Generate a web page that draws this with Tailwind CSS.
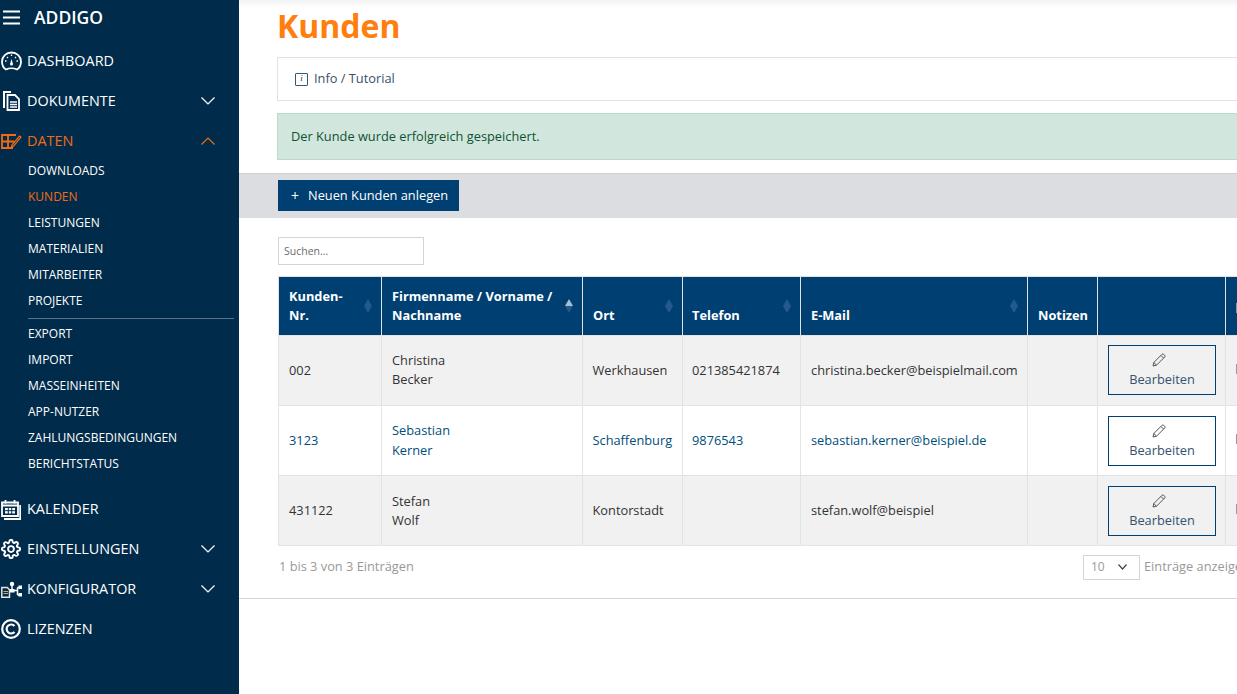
<!DOCTYPE html>
<html lang="de">
  <head>
    <meta charset="UTF-8" />
    <title>Kunden</title>
    <script src="https://cdn.jsdelivr.net/npm/@tailwindcss/browser@4"></script>
  </head>
  <body class="font-['Open_Sans',sans-serif] bg-white overflow-hidden">
    <div class="flex h-[694px] w-[1237px] overflow-hidden">
      <!-- sidebar -->
      <aside class="w-[239px] shrink-0 h-full bg-[#002b4a] text-white">
        <div class="flex items-center h-[35px] pl-[3px]">
          <svg class="w-[17px] h-[15px]" viewBox="0 0 17 15" stroke="#fff" stroke-width="1.800"><path d="M0 1.500h17M0 7.500h17M0 13.500h17"/></svg>
          <span class="ml-[14px] text-[17.500px] font-semibold">ADDIGO</span>
        </div>
        <nav class="pt-[6px] text-[14.400px]">
          <a class="flex items-center h-[40px]">
            <span class="w-[27px] pl-[1px]"><svg class="w-[21px] h-[20px]" viewBox="0 0 21 20" fill="none" stroke="#fff" stroke-width="1.800"><path d="M5 18.500c-2.500-1.500-4-4.500-4-8a9.500 9 0 0 1 19 0c0 3.500-1.500 6.500-4 8-3-1.500-8-1.500-11 0z"/><path d="M10.500 8l1.500 5a1.500 1.500 0 1 1-3 0z" fill="#fff" stroke="none"/><path d="M4 10h1.500M15.500 10H17M6 6l1 1M15 6l-1 1M10.500 3.500V5" stroke-width="1.300"/></svg></span>
            <span>DASHBOARD</span>
          </a>
          <a class="flex items-center h-[40px]">
            <span class="w-[27px] pl-[3px]"><svg class="w-[17px] h-[20px]" viewBox="0 0 17 20" fill="none" stroke="#fff" stroke-width="1.800"><path d="M1 17V1h7" stroke-width="2"/><path d="M4.500 19V4h7.500l4 4v11z"/><path d="M7 11h7M7 13.500h7M7 16h7" stroke-width="1.500"/></svg></span>
            <span>DOKUMENTE</span>
            <svg class="ml-auto mr-[24px] w-[14px] h-[8px]" viewBox="0 0 14 8" fill="none" stroke="#fff" stroke-width="1.200"><path d="M.5.5 7 7l6.500-6.500"/></svg>
          </a>
          <a class="flex items-center h-[40px] text-[#f26b14]">
            <span class="w-[27px] pl-[1px]"><svg class="w-[21px] h-[15px]" viewBox="0 0 21 15" fill="none" stroke="#f26b14" stroke-width="1.800"><path d="M15 1H1v13h11M1 7.500h12M7 1v13"/><path d="M11 11l7.500-9 1.500 1.200-7.500 9-2 .8z" stroke-width="1.200"/></svg></span>
            <span>DATEN</span>
            <svg class="ml-auto mr-[24px] w-[14px] h-[8px]" viewBox="0 0 14 8" fill="none" stroke="#f26b14" stroke-width="1.200"><path d="M.5 7.500 7 1l6.500 6.500"/></svg>
          </a>
          <div class="text-[12px] pl-[28px] pr-[5px] -mt-[3px]">
            <a class="flex items-center h-[26px]">DOWNLOADS</a>
            <a class="flex items-center h-[26px] text-[#f26b14]">KUNDEN</a>
            <a class="flex items-center h-[26px]">LEISTUNGEN</a>
            <a class="flex items-center h-[26px]">MATERIALIEN</a>
            <a class="flex items-center h-[26px]">MITARBEITER</a>
            <a class="flex items-center h-[26px]">PROJEKTE</a>
            <div class="border-t border-[#5a7288] mt-[4px] mb-[2px]"></div>
            <a class="flex items-center h-[26px]">EXPORT</a>
            <a class="flex items-center h-[26px]">IMPORT</a>
            <a class="flex items-center h-[26px]">MASSEINHEITEN</a>
            <a class="flex items-center h-[26px]">APP-NUTZER</a>
            <a class="flex items-center h-[26px]">ZAHLUNGSBEDINGUNGEN</a>
            <a class="flex items-center h-[26px]">BERICHTSTATUS</a>
          </div>
          <div class="h-[12px]"></div>
          <a class="flex items-center h-[40px]">
            <span class="w-[27px] pl-[1px]"><svg class="w-[20px] h-[21px]" viewBox="0 0 20 21" fill="none" stroke="#fff" stroke-width="1.800"><path d="M1 3.500h16v13.500H1z"/><path d="M1 6.500h16" stroke-width="2"/><path d="M4.500 1v3.500M13.500 1v3.500M19.200 6v14H3"/><path d="M4 9h10v5.500H4z" fill="#fff" stroke="none"/><path d="M7.300 8.500v6.500M10.700 8.500v6.500M4 11.700h10" stroke="#002b4a" stroke-width="1"/></svg></span>
            <span>KALENDER</span>
          </a>
          <a class="flex items-center h-[40px]">
            <span class="w-[27px] pl-[1px]"><svg class="w-[20px] h-[20px]" viewBox="0 0 24 24" fill="none" stroke="#fff" stroke-width="2.300"><path d="M12 15.500a3.500 3.500 0 1 0 0-7 3.500 3.500 0 0 0 0 7z"/><path d="M19.400 15a1.650 1.650 0 0 0 .33 1.820l.06.06a2 2 0 1 1-2.830 2.830l-.06-.06a1.650 1.650 0 0 0-2.820 1.170V21a2 2 0 0 1-4 0v-.09A1.650 1.650 0 0 0 7.260 19.700l-.06.06a2 2 0 1 1-2.830-2.830l.06-.06A1.650 1.650 0 0 0 3.260 14H3a2 2 0 0 1 0-4h.09A1.650 1.650 0 0 0 4.300 7.260l-.06-.06a2 2 0 1 1 2.830-2.830l.06.06A1.650 1.650 0 0 0 10 3.260V3a2 2 0 0 1 4 0v.09a1.650 1.650 0 0 0 2.820 1.170l.06-.06a2 2 0 1 1 2.830 2.830l-.06.06A1.650 1.650 0 0 0 20.740 10H21a2 2 0 0 1 0 4h-.09a1.650 1.650 0 0 0-1.510 1z"/></svg></span>
            <span>EINSTELLUNGEN</span>
            <svg class="ml-auto mr-[24px] w-[14px] h-[8px]" viewBox="0 0 14 8" fill="none" stroke="#fff" stroke-width="1.200"><path d="M.5.5 7 7l6.500-6.500"/></svg>
          </a>
          <a class="flex items-center h-[40px]">
            <span class="w-[27px] pl-[1px]"><svg class="w-[21px] h-[17px]" viewBox="0 0 21 17" fill="none" stroke="#fff" stroke-width="1.500"><path d="M.8 6.500h5.500l2.200 2.200v7.500H.8z" stroke="#dfe4e8"/><path d="M2.500 10.500h4.500M2.500 12.500h4.500" stroke="#e0a050" stroke-width="1.200"/><circle cx="11" cy="3" r="2.200" fill="#fff" stroke="none"/><path d="M11 5v4.500"/><rect x="9" y="8" width="4.500" height="3.500" fill="#fff" stroke="none"/><path d="M13 9.500h3.500M16.500 6.500v7.500M16.500 6.500h2M16.500 14h2"/><rect x="17.500" y="4.500" width="3.500" height="3.500" fill="#fff" stroke="none"/><rect x="17.500" y="12" width="3.500" height="3.500" fill="#fff" stroke="none"/></svg></span>
            <span>KONFIGURATOR</span>
            <svg class="ml-auto mr-[24px] w-[14px] h-[8px]" viewBox="0 0 14 8" fill="none" stroke="#fff" stroke-width="1.200"><path d="M.5.5 7 7l6.500-6.500"/></svg>
          </a>
          <a class="flex items-center h-[40px]">
            <span class="w-[27px] pl-[1px]"><svg class="w-[20px] h-[20px]" viewBox="0 0 20 20" fill="none" stroke="#fff" stroke-width="2.200"><circle cx="10" cy="10" r="8.800"/><path d="M13.500 7a4.500 4.500 0 1 0 0 6"/></svg></span>
            <span>LIZENZEN</span>
          </a>
        </nav>
      </aside>

      <!-- main -->
      <main class="flex-1 min-w-0 h-full overflow-hidden relative">
        <div class="w-[1300px]">
          <div class="h-[8px] bg-gradient-to-b from-[#f3f3f3] to-white -mb-[8px]"></div>
          <div class="pl-[38px]">
            <h1 class="text-[32px] leading-[40px] pt-[6px] font-bold text-[#ff7f0e]">Kunden</h1>
            <div class="mt-[11px] h-[44px] border border-[#e0e2e6] flex items-center pl-[17px] text-[12.800px] text-[#3a5068]">
              <span class="w-[13px] h-[13px] border border-[#34597a] rounded-[1px] flex items-center justify-center text-[9px] italic font-['Liberation_Serif',serif] text-[#333] mr-[6px]">i</span>
              Info / Tutorial
            </div>
            <div class="mt-[12px] h-[47px] border border-[#badbcc] bg-[#d1e7dd] flex items-center pl-[13px] text-[12.800px] text-[#0f5132]">Der Kunde wurde erfolgreich gespeichert.</div>
          </div>
          <div class="mt-[13px] h-[45px] bg-[#dcdde0] border-t border-[#cfd0d3] pl-[39px] pt-[6px]">
            <button class="h-[31px] w-[181px] bg-[#003f72] text-white text-[12.800px] flex items-center pl-[13px]">
              <span class="mr-[9px] text-[14px]">+</span>Neuen Kunden anlegen
            </button>
          </div>
          <div class="pl-[39px]">
            <input class="mt-[19px] block w-[146px] h-[28px] border border-[#d3d5d9] px-[5px] text-[10.500px] text-[#555] placeholder:text-[#6b6b6b] outline-none" placeholder="Suchen..." />
            <table class="mt-[11px] table-fixed border-collapse text-[12.800px] text-[#333] w-[1040px]">
              <colgroup>
                <col class="w-[103px]" /><col class="w-[201px]" /><col class="w-[100px]" /><col class="w-[118px]" /><col class="w-[227px]" /><col class="w-[70px]" /><col class="w-[128px]" /><col class="w-[93px]" />
              </colgroup>
              <thead class="bg-[#003f72] text-white font-bold text-left leading-[19px]">
                <tr class="h-[59px] align-bottom">
                  <th class="relative border border-[#dfe1e4] border-b-0 pl-[10px] pb-[10px] font-bold">Kunden-<br />Nr.
                    <svg class="absolute right-[9px] top-[22px] w-[8px] h-[14px]" viewBox="0 0 8 14" fill="#24598a"><path d="M4 0l4 7-4 7-4-7z"/></svg></th>
                  <th class="relative border border-[#dfe1e4] border-b-0 pl-[10px] pb-[10px] font-bold">Firmenname / Vorname /<br />Nachname
                    <svg class="absolute right-[9px] top-[22px] w-[8px] h-[14px]" viewBox="0 0 8 14"><path fill="#a9bdcf" d="M4 0l4 7H0z"/><path fill="#24598a" d="M4 14l4-7H0z"/></svg></th>
                  <th class="relative border border-[#dfe1e4] border-b-0 pl-[10px] pb-[10px] font-bold">Ort
                    <svg class="absolute right-[9px] top-[22px] w-[8px] h-[14px]" viewBox="0 0 8 14" fill="#24598a"><path d="M4 0l4 7-4 7-4-7z"/></svg></th>
                  <th class="relative border border-[#dfe1e4] border-b-0 pl-[9px] pb-[10px] font-bold">Telefon
                    <svg class="absolute right-[9px] top-[22px] w-[8px] h-[14px]" viewBox="0 0 8 14" fill="#24598a"><path d="M4 0l4 7-4 7-4-7z"/></svg></th>
                  <th class="relative border border-[#dfe1e4] border-b-0 pl-[10px] pb-[10px] font-bold">E-Mail
                    <svg class="absolute right-[9px] top-[22px] w-[8px] h-[14px]" viewBox="0 0 8 14" fill="#24598a"><path d="M4 0l4 7-4 7-4-7z"/></svg></th>
                  <th class="border border-[#dfe1e4] border-b-0 pl-[10px] pb-[10px] font-bold">Notizen</th>
                  <th class="border border-[#dfe1e4] border-b-0"></th>
                  <th class="border border-[#dfe1e4] border-b-0 pl-[10px] pb-[22px]"><span class="block w-[2px] h-[10px] bg-[#8a97a3]"></span></th>
                </tr>
              </thead>
              <tbody class="leading-[19px]">
                <tr class="h-[70px] bg-[#f1f1f1]">
                  <td class="border border-[#e2e3e5] pl-[10px]">002</td>
                  <td class="border border-[#e2e3e5] pl-[10px]"><div class="-translate-y-px">Christina<br />Becker</div></td>
                  <td class="border border-[#e2e3e5] pl-[9.500px]">Werkhausen</td>
                  <td class="border border-[#e2e3e5] pl-[9px]">021385421874</td>
                  <td class="border border-[#e2e3e5] pl-[10px]">christina.becker@beispielmail.com</td>
                  <td class="border border-[#e2e3e5]"></td>
                  <td class="border border-[#e2e3e5] pl-[10px]">
                    <button class="w-[108px] h-[50px] pt-[2px] -translate-y-px border border-[#003f72] flex flex-col items-center justify-center text-[#34536e]">
                      <svg class="w-[14px] h-[14px] mb-[3px] -translate-x-[3px]" viewBox="0 0 14 14" fill="none" stroke="#555" stroke-width="1"><path d="M1 13l.8-3.500L10 1.300a1.200 1.200 0 0 1 1.700 0l1 1a1.200 1.200 0 0 1 0 1.700L4.500 12.200zM9 2.500l2.500 2.500M1.800 9.500l2.700 2.700"/></svg>
                      Bearbeiten
                    </button>
                  </td>
                  <td class="border border-[#e2e3e5] pl-[10px]"><span class="block w-[2px] h-[10px] -mt-[3px] bg-[#999]"></span></td>
                </tr>
                <tr class="h-[70px] bg-white text-[#004e7c]">
                  <td class="border border-[#e2e3e5] pl-[10px]">3123</td>
                  <td class="border border-[#e2e3e5] pl-[10px] leading-[20px]"><div class="-translate-y-px">Sebastian<br />Kerner</div></td>
                  <td class="border border-[#e2e3e5] pl-[9.500px]">Schaffenburg</td>
                  <td class="border border-[#e2e3e5] pl-[9px]">9876543</td>
                  <td class="border border-[#e2e3e5] pl-[10px]">sebastian.kerner@beispiel.de</td>
                  <td class="border border-[#e2e3e5]"></td>
                  <td class="border border-[#e2e3e5] pl-[10px]">
                    <button class="w-[108px] h-[50px] pt-[2px] border border-[#003f72] flex flex-col items-center justify-center text-[#34536e]">
                      <svg class="w-[14px] h-[14px] mb-[3px] -translate-x-[3px]" viewBox="0 0 14 14" fill="none" stroke="#555" stroke-width="1"><path d="M1 13l.8-3.500L10 1.300a1.200 1.200 0 0 1 1.700 0l1 1a1.200 1.200 0 0 1 0 1.700L4.500 12.200zM9 2.500l2.500 2.500M1.800 9.500l2.700 2.700"/></svg>
                      Bearbeiten
                    </button>
                  </td>
                  <td class="border border-[#e2e3e5] pl-[10px]"><span class="block w-[2px] h-[10px] -mt-[3px] bg-[#999]"></span></td>
                </tr>
                <tr class="h-[70px] bg-[#f1f1f1]">
                  <td class="border border-[#e2e3e5] pl-[10px]">431122</td>
                  <td class="border border-[#e2e3e5] pl-[10px]">Stefan<br />Wolf</td>
                  <td class="border border-[#e2e3e5] pl-[9.500px]">Kontorstadt</td>
                  <td class="border border-[#e2e3e5] pl-[9px]"></td>
                  <td class="border border-[#e2e3e5] pl-[10px]">stefan.wolf@beispiel</td>
                  <td class="border border-[#e2e3e5]"></td>
                  <td class="border border-[#e2e3e5] pl-[10px]">
                    <button class="w-[108px] h-[50px] pt-[2px] border border-[#003f72] flex flex-col items-center justify-center text-[#34536e]">
                      <svg class="w-[14px] h-[14px] mb-[3px] -translate-x-[3px]" viewBox="0 0 14 14" fill="none" stroke="#555" stroke-width="1"><path d="M1 13l.8-3.500L10 1.300a1.200 1.200 0 0 1 1.700 0l1 1a1.200 1.200 0 0 1 0 1.700L4.500 12.200zM9 2.500l2.500 2.500M1.800 9.500l2.700 2.700"/></svg>
                      Bearbeiten
                    </button>
                  </td>
                  <td class="border border-[#e2e3e5] pl-[10px]"><span class="block w-[2px] h-[10px] -mt-[3px] bg-[#999]"></span></td>
                </tr>
              </tbody>
            </table>
            <div class="flex items-center h-[24px] mt-[9px] text-[12.800px] text-[#999] w-[1040px]">
              <span class="w-[805px] pl-px">1 bis 3 von 3 Einträgen</span>
              <div class="w-[57px] h-[25px] border border-[#d3d5d9] flex items-center pl-[7px] text-[12px] text-[#999]">10
                <svg class="ml-auto mr-[12px] w-[9px] h-[6px]" viewBox="0 0 9 6" fill="none" stroke="#444" stroke-width="1.200"><path d="M.5.500 4.500 5l4-4.500"/></svg>
              </div>
              <span class="ml-[4px] whitespace-nowrap">Einträge anzeigen</span>
            </div>
          </div>
          <div class="mt-[19px] border-t border-[#d3d5d9]"></div>
        </div>
      </main>
    </div>
  </body>
</html>
